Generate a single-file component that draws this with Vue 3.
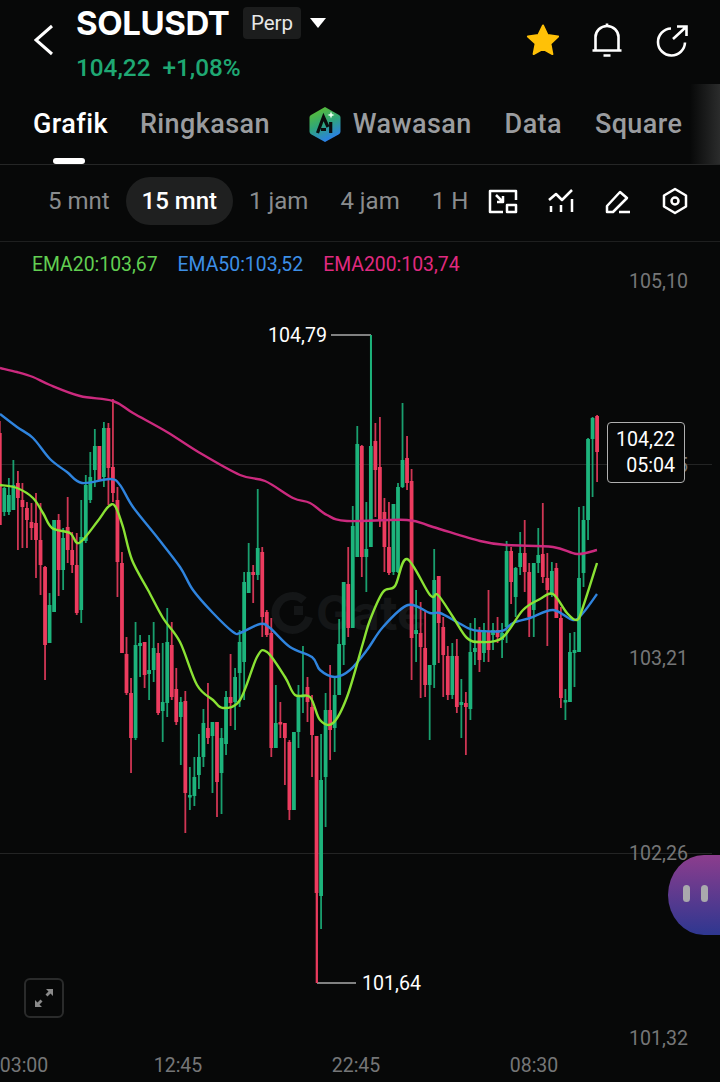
<script setup>
const tfs = ['5 mnt', '15 mnt', '1 jam', '4 jam', '1 H']
const legend = [
  { t: 'EMA20:103,67', c: 'l-green' },
  { t: 'EMA50:103,52', c: 'l-blue' },
  { t: 'EMA200:103,74', c: 'l-pink' }
]
// [isGreen, high, low, bodyTop, bodyBottom]
const raw = [
[0,421,525,433,525],[1,487,516,488,512],[1,478,515,495,512],[1,460,505,485,510],[0,471,550,483,498],
[0,483,548,500,507],[0,502,548,508,520],[0,503,540,522,528],[0,493,578,523,540],[0,503,595,540,565],
[0,566,680,567,645],[1,593,643,605,643],[1,520,612,520,612],[0,514,596,520,570],[1,528,590,538,570],
[0,497,563,527,550],[0,532,573,550,565],[0,533,615,565,613],[1,500,623,537,610],[1,475,543,485,541],
[1,452,503,477,500],[1,429,487,446,470],[0,446,481,446,480],[1,422,487,428,477],[0,423,505,428,468],
[0,399,502,467,493],[0,487,597,500,562],[0,552,653,563,653],[0,637,695,654,693],[0,678,773,693,738],
[1,622,740,645,738],[1,635,677,643,646],[0,642,688,642,675],[1,635,700,670,674],[1,622,682,648,670],
[0,643,715,653,713],[1,643,742,702,711],[1,608,717,642,703],[0,622,700,645,697],[0,668,725,689,722],
[1,697,765,702,717],[0,691,833,701,793],[1,767,810,795,797],[1,757,806,777,796],[1,734,789,757,775],
[1,709,767,723,757],[0,683,744,728,738],[1,722,793,722,736],[0,722,817,722,782],[1,728,814,738,773],
[1,691,755,697,744],[0,654,726,697,703],[1,668,730,677,702],[1,630,707,642,673],[1,572,700,582,662],
[1,543,593,572,593],[0,565,603,572,575],[1,489,580,548,575],[0,547,637,552,617],[0,610,637,612,635],
[0,618,757,633,748],[1,685,748,723,748],[0,702,738,722,724],[0,723,785,723,738],[0,740,820,742,810],
[1,732,810,732,810],[1,685,748,697,732],[1,646,713,695,697],[0,677,722,687,702],[0,695,777,707,735],
[0,736,983,736,893],[1,734,929,780,896],[1,693,827,710,777],[0,665,760,710,730],[1,677,752,695,728],
[1,619,695,644,695],[1,582,665,582,645],[0,547,637,584,628],[1,506,628,526,628],[1,426,557,444,557],
[0,445,577,446,557],[1,502,592,549,557],[1,335,547,446,547],[0,423,517,441,470],[0,417,527,467,520],
[0,498,572,512,547],[0,502,575,547,573],[1,504,575,504,572],[1,483,573,487,572],[1,403,488,460,487],
[0,436,490,458,483],[0,469,680,481,638],[1,590,662,630,634],[0,602,698,633,647],[0,610,697,648,685],
[1,665,740,665,685],[1,549,688,580,665],[0,576,663,576,623],[0,617,697,627,655],[0,646,700,656,695],
[1,643,699,656,695],[0,639,713,656,707],[1,679,738,702,705],[0,692,755,703,707],[1,623,720,652,709],
[1,618,665,648,652],[0,627,672,632,660],[1,623,662,630,653],[0,590,662,632,650],[1,623,650,630,635],
[0,617,643,630,637],[1,623,658,633,640],[1,541,643,551,627],[0,547,604,551,582],[1,567,617,568,597],
[1,532,575,553,567],[0,520,592,553,572],[0,563,637,572,617],[1,563,637,563,610],[1,528,573,555,563],
[0,503,583,554,577],[0,553,646,578,590],[1,562,597,571,595],[0,563,618,568,618],[0,607,708,618,698],
[1,689,720,700,702],[1,633,702,652,702],[1,632,687,650,653],[1,507,652,578,652],[1,506,587,520,573],
[1,438,540,439,520],[1,417,497,418,439],[0,415,482,416,452]
]
const candles = raw.map((r, i) => ({
  x: -0.2 + 4.525 * i,
  cls: r[0] ? 'up' : 'down',
  hi: r[1], lo: r[2], top: r[3], h: Math.max(r[4] - r[3], 2.5)
}))

function smooth(p) {
  let d = `M${p[0][0]} ${p[0][1]}`
  for (let i = 0; i < p.length - 1; i++) {
    const a = p[i - 1] || p[i], b = p[i], c = p[i + 1], e = p[i + 2] || c
    const c1 = [b[0] + (c[0] - a[0]) / 6, b[1] + (c[1] - a[1]) / 6]
    const c2 = [c[0] - (e[0] - b[0]) / 6, c[1] - (e[1] - b[1]) / 6]
    d += `C${c1[0].toFixed(1)} ${c1[1].toFixed(1)} ${c2[0].toFixed(1)} ${c2[1].toFixed(1)} ${c[0]} ${c[1]}`
  }
  return d
}
const ema200 = smooth([[0,368],[17,372],[33,377],[50,385],[80,396],[113,401],[133,413],[167,432],[200,453],[240,475],[265,481],[293,498],[310,503],[327,515],[347,521],[407,520],[433,527],[480,541],[507,545],[553,547],[577,554],[597,550]])
const ema50 = smooth([[0,414],[17,427],[33,438],[50,459],[67,472],[82,483],[110,479],[120,485],[133,507],[157,537],[180,567],[193,590],[213,613],[233,632],[240,633],[260,624],[270,628],[290,647],[312,657],[320,670],[335,677],[350,670],[367,650],[383,627],[408,605],[430,613],[440,613],[457,622],[470,629],[480,631],[502,631],[513,623],[530,618],[553,610],[573,620],[583,613],[597,594]])
const ema20 = smooth([[0,485],[17,488],[33,498],[43,513],[52,528],[70,533],[79,543],[97,522],[108,507],[115,506],[123,527],[132,560],[148,590],[163,618],[180,642],[197,685],[213,700],[223,708],[240,700],[257,657],[267,652],[285,677],[295,695],[310,697],[320,720],[333,723],[347,697],[363,643],[370,620],[383,592],[395,586],[407,559],[430,595],[438,595],[453,617],[467,638],[480,642],[502,638],[523,610],[540,599],[553,594],[567,613],[577,620],[583,607],[597,563]])
const axis = [
  { t: '105,10', y: 281 }, { t: '104,15', y: 465 }, { t: '103,21', y: 658 },
  { t: '102,26', y: 853 }, { t: '101,32', y: 1038 }
]
const times = [
  { t: '03:00', x: 24 }, { t: '12:45', x: 178 }, { t: '22:45', x: 356 }, { t: '08:30', x: 534 }
]
</script>

<template>
  <div class="page">
    <header class="head">
      <svg class="back" width="20" height="32" viewBox="0 0 20 32"><path d="M18 2 2 16l16 14" /></svg>
      <div class="title-col">
        <div class="title-row">
          <span class="sym">SOLUSDT</span>
          <span class="perp">Perp</span>
          <span class="caret"></span>
        </div>
        <div class="quote"><span>104,22</span><span>+1,08%</span></div>
      </div>
      <div class="head-icons">
        <svg width="36" height="34" viewBox="0 0 36 34"><path class="star" d="M18 2.5l4.6 9.6 10.5 1.4-7.7 7.2 2 10.4L18 25.9 8.6 31l2-10.4-7.7-7.2 10.5-1.4z" /></svg>
        <svg class="bell" width="34" height="36" viewBox="0 0 34 36"><g class="line"><path d="M2.500 28.500h29M5.500 28.500V15a11.500 11 0 0 1 23 0v13.500" /><path d="M13.500 33.500h7M17 1.500v3" /></g></svg>
        <svg width="34" height="34" viewBox="0 0 34 34"><g class="line"><path d="M16 5.5a13.5 13.5 0 1 0 14 14" /><path d="M18 16 31 4M22 3.5h9.5V13" /></g></svg>
      </div>
    </header>

    <nav class="tabs">
      <span class="tab on">Grafik</span>
      <span class="tab">Ringkasan</span>
      <span class="tab ai">
        <svg width="34" height="37" viewBox="0 0 34 37">
          <defs><linearGradient id="aig" x1="0.2" y1="0" x2="0.6" y2="1"><stop offset="0" stop-color="#5fc02c" /><stop offset=".5" stop-color="#2fa57a" /><stop offset="1" stop-color="#2a7df0" /></linearGradient></defs>
          <path d="M17 1 31 9a3 3 0 0 1 1.500 2.600v14a3 3 0 0 1-1.500 2.600L17 36 3 28.200a3 3 0 0 1-1.500-2.600v-14A3 3 0 0 1 3 9z" fill="url(#aig)" />
          <path d="M9.500 27 15.500 11l4.500 10M13 23.500h5M22.700 16v11" fill="none" stroke="#0a0c0c" stroke-width="3.200" />
          <path d="M23 5.500l1 2.500 2.500 1-2.500 1-1 2.500-1-2.500-2.500-1 2.500-1z" fill="#e8fff0" />
        </svg>
        Wawasan
      </span>
      <span class="tab">Data</span>
      <span class="tab">Square</span>
      <i class="fade"></i>
      <i class="bar"></i>
    </nav>

    <div class="tools">
      <span v-for="t in tfs" :key="t" class="tf" :class="{ cur: t === '15 mnt' }">{{ t }}</span>
      <div class="tool-icons">
        <svg width="30" height="26" viewBox="0 0 30 26"><g class="line thin"><path d="M28 12V3H2v21h13" /><rect x="19" y="17" width="9" height="7" /><path d="M8 7l7 7M9 14h6V8" /></g></svg>
        <svg width="28" height="26" viewBox="0 0 28 26"><g class="line thin"><path d="M2 12l7-6 6 6 10-10" /><path d="M4 18v6M14 17v7M25 11v13" /></g></svg>
        <svg width="28" height="26" viewBox="0 0 28 26"><g class="line thin"><path d="M3 24v-6L16 4l7 6-14 14zM15 24h11" /></g></svg>
        <svg width="28" height="28" viewBox="0 0 28 28"><g class="line thin"><path d="M14 2l11 6.500v11L14 26 3 19.500v-11z" /><circle cx="14" cy="14" r="3.500" /></g></svg>
      </div>
    </div>

    <section class="chart">
      <svg class="plot" width="720" height="838" viewBox="0 242 720 838">
        <path class="grid" d="M0 464.500H712M0 853.500H712" />
        <path class="mark-ring" d="M304 600.500A17 17 0 1 0 309 617" />
        <rect x="294" y="606" width="9" height="9" class="mark-sq" />
        <text x="316" y="630" class="mark">Gate</text>
        <g v-for="(c, i) in candles" :key="i" :class="c.cls">
          <rect :x="c.x - 0.9" :y="c.hi" width="1.800" :height="c.lo - c.hi" class="wick" />
          <rect :x="c.x - 1.900" :y="c.top" width="3.800" :height="c.h" />
        </g>
        <path :d="ema200" class="ema e200" />
        <path :d="ema50" class="ema e50" />
        <path :d="ema20" class="ema e20" />
        <path class="lead" d="M331 335H371M317 983H356" />
        <path class="lead-r" d="M317 893V983" />
        <path class="lead-g" d="M371 335V450" />
      </svg>

      <div class="legend"><span v-for="l in legend" :key="l.t" :class="l.c">{{ l.t }}</span></div>
      <span v-for="a in axis" :key="a.t" class="ax" :style="{ top: a.y - 253 + 'px' }">{{ a.t }}</span>
      <span v-for="t in times" :key="t.t" class="time" :style="{ left: t.x + 'px' }">{{ t.t }}</span>
      <span class="ext hi">104,79</span>
      <span class="ext lo">101,64</span>
      <div class="now"><span>104,22</span><span>05:04</span></div>
      <div class="bubble"><i></i><i></i></div>
      <div class="expand">
        <svg width="20" height="20" viewBox="0 0 20 20"><path d="M12 1h7v7l-2.500-2.500-3 3-2-2 3-3zM8 19H1v-7l2.500 2.500 3-3 2 2-3 3z" fill="#8a8a8a" /></svg>
      </div>
    </section>
  </div>
</template>

<style scoped>
.page { width: 720px; height: 1082px; background: #070808; overflow: hidden; color: #fff; font-family: Roboto, "Liberation Sans", sans-serif; display: flex; flex-direction: column; }
.head { height: 84px; display: flex; align-items: flex-start; flex: none; }
.back { margin: 24px 0 0 34px; flex: none; }
.back path { fill: none; stroke: #fff; stroke-width: 3; }
.title-col { margin-left: 22px; }
.title-row { display: flex; align-items: center; height: 46px; }
.sym { font: 700 33px/46px Inter, Roboto, sans-serif; letter-spacing: -.4px; width: 167px; }
.perp { background: #1c1d1d; color: #e8e8e8; font-size: 20.500px; border-radius: 4px; width: 58px; height: 32px; line-height: 32px; text-align: center; }
.caret { margin-left: 9px; border: 8px solid transparent; border-top: 10px solid #fff; border-bottom: 0; }
.quote { display: flex; gap: 12px; color: #1fa873; font-size: 24.300px; font-weight: 500; line-height: 30px; margin-top: 7px; }
.head-icons { margin: 22px 0 0 auto; display: flex; align-items: center; gap: 29px; padding-right: 31px; }
.bell { margin-right: 2px; }
.star { fill: #ffc107; stroke: #ffc107; stroke-width: 2; stroke-linejoin: round; }
.line { fill: none; stroke: #fff; stroke-width: 2.600; }
.line.thin { stroke-width: 2.500; stroke-linejoin: round; }

.tabs { position: relative; height: 80px; flex: none; display: flex; align-items: center; gap: 33px; padding-left: 33px; border-bottom: 1px solid #252626; font-size: 27px; font-weight: 500; color: #9a9c9f; letter-spacing: .4px; }
.tab { line-height: 80px; white-space: nowrap; }
.tab.on { color: #fff; margin-right: -1px; }
.tab.ai { display: flex; align-items: center; gap: 11px; margin-left: 5px; }
.fade { position: absolute; right: 0; top: 0; width: 30px; height: 80px; background: linear-gradient(90deg, #070808, #2b2c2c); }
.bar { position: absolute; left: 53px; bottom: 0; width: 32px; height: 6px; border-radius: 3px; background: #fff; }

.tools { height: 77px; flex: none; display: flex; align-items: center; padding: 0 0 4px 32px; box-sizing: border-box; border-bottom: 1px solid #1e1f1f; color: #8a8c8e; font-size: 24px; }
.tf { padding: 0 16px; height: 48px; line-height: 48px; white-space: nowrap; }
.tf.cur { background: #1f2020; border-radius: 24px; color: #fff; font-weight: 500; }
.tool-icons { margin-left: auto; display: flex; align-items: center; gap: 29px; padding-right: 31px; }

.chart { position: relative; flex: 1; }
.plot { position: absolute; left: 0; top: 0; display: block; }
.grid { stroke: #232424; stroke-width: 1; }
.mark { font: 700 48px Inter, Roboto, sans-serif; fill: #141617; }
.mark-ring { fill: none; stroke: #141617; stroke-width: 8; }
.mark-sq { fill: #141617; }
.up { fill: #1db47c; }
.down { fill: #ec3c5f; }
.wick { opacity: .88; }
.ema { fill: none; stroke-width: 2.400; stroke-linejoin: round; }
.e200 { stroke: #cb2a7e; }
.e50 { stroke: #2f84de; }
.e20 { stroke: #8ae234; }
.lead { fill: none; stroke: #a9a9a9; stroke-width: 1.500; }
.lead-r { stroke: #ec3c5f; stroke-width: 1.800; }
.lead-g { stroke: #1db47c; stroke-width: 1.800; }

.legend { position: absolute; left: 32px; top: 11px; display: flex; gap: 20px; font-size: 19.400px; line-height: 24px; }
.l-green { color: #62cf52; }
.l-blue { color: #3d8fe6; }
.l-pink { color: #e02a80; }
.ax { position: absolute; right: 32px; font-size: 19.600px; line-height: 24px; color: #757677; }
.time { position: absolute; top: 812px; width: 60px; margin-left: -30px; text-align: center; font-size: 19.500px; line-height: 24px; color: #757677; }
.ext { position: absolute; font-size: 19.600px; line-height: 24px; color: #fff; }
.hi { left: 268px; top: 82px; }
.lo { left: 362px; top: 730px; }
.now { position: absolute; left: 607px; top: 180px; width: 78px; height: 61px; box-sizing: border-box; border: 1px solid #b0b0b0; border-radius: 4px; background: #070808; display: flex; flex-direction: column; align-items: flex-end; justify-content: center; padding-right: 9px; font-size: 19.600px; line-height: 26px; }
.bubble { position: absolute; left: 668px; top: 613px; width: 72px; height: 80px; border-radius: 36px 0 0 36px / 40px 0 0 40px; background: linear-gradient(180deg, #8c3d8d, #2e3790); display: flex; gap: 11px; padding: 30px 0 0 15px; box-sizing: border-box; }
.bubble i { width: 7px; height: 17px; border-radius: 4px; background: #a9a9ad; }
.expand { position: absolute; left: 24px; top: 736px; width: 40px; height: 40px; box-sizing: border-box; border: 2px solid #2a2b2b; border-radius: 6px; display: flex; align-items: center; justify-content: center; }
</style>
